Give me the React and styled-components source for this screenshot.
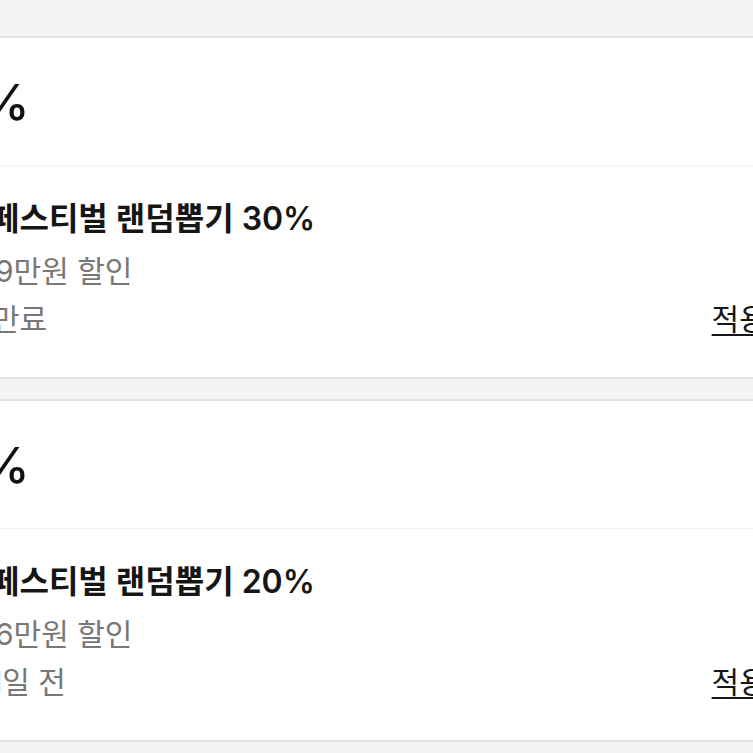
import React from "react";
import styled, { createGlobalStyle } from "styled-components";

const GlobalStyle = createGlobalStyle`
  html, body { margin: 0; padding: 0; background: #f4f4f4; }
  body { font-family: Inter, "Noto Sans CJK KR", "Noto Sans", sans-serif; overflow: hidden; }
`;

const Page = styled.div`
  width: 753px;
  height: 753px;
  overflow: hidden;
  background: #f4f4f4;
  padding-top: 36px;
  box-sizing: border-box;
  display: flex;
  flex-direction: column;
  gap: 20px;
`;

const Card = styled.section`
  width: calc(100% + 98px);
  margin-left: -20px;
  background: #fff;
  border-top: 2px solid #e3e3e3;
  border-bottom: 2px solid #e3e3e3;
  flex-shrink: 0;
`;

const Header = styled.div`
  height: 127px;
  display: flex;
  align-items: center;
  padding-left: ${(p) => 12 + p.$indent}px;
  border-bottom: 1px solid #f0f0f0;
  font-size: 50px;
  font-weight: 500;
  color: #111;
`;

const Body = styled.div`
  padding: 29px 9px 34px 12px;
  display: flex;
  flex-direction: column;
`;

const Title = styled.div`
  font-size: 32px;
  line-height: 48px;
  font-weight: 600;
  color: #161616;
  margin-left: ${(p) => p.$indent}px;
`;

const Sub = styled.div`
  font-size: 30px;
  line-height: 48px;
  color: #777;
  margin-top: ${(p) => (p.$first ? "4px" : "0")};
  margin-left: ${(p) => p.$indent}px;
`;

const Footer = styled.div`
  display: flex;
  justify-content: space-between;
  align-items: center;
`;

const Apply = styled.button`
  font: inherit;
  font-size: 30px;
  line-height: 48px;
  color: #161616;
  background: none;
  border: none;
  padding: 0;
  text-decoration: underline;
  text-underline-offset: 4px;
  text-decoration-thickness: 2px;
  cursor: pointer;
`;

const coupons = [
  { rate: "%", title: "페스티벌 랜덤뽑기 30%", max: "9만원 할인", due: "만료", dueIndent: 0 },
  { rate: "%", title: "페스티벌 랜덤뽑기 20%", max: "6만원 할인", due: "l일 전", dueIndent: 3 },
];

export default function App() {
  return (
    <>
      <GlobalStyle />
      <Page>
        {coupons.map((c, i) => (
          <Card key={i}>
            <Header $indent={-17}>{c.rate}</Header>
            <Body>
              <Title $indent={-2}>{c.title}</Title>
              <Sub $first $indent={3}>{c.max}</Sub>
              <Footer>
                <Sub $indent={c.dueIndent}>{c.due}</Sub>
                <Apply>적용하기</Apply>
              </Footer>
            </Body>
          </Card>
        ))}
      </Page>
    </>
  );
}
